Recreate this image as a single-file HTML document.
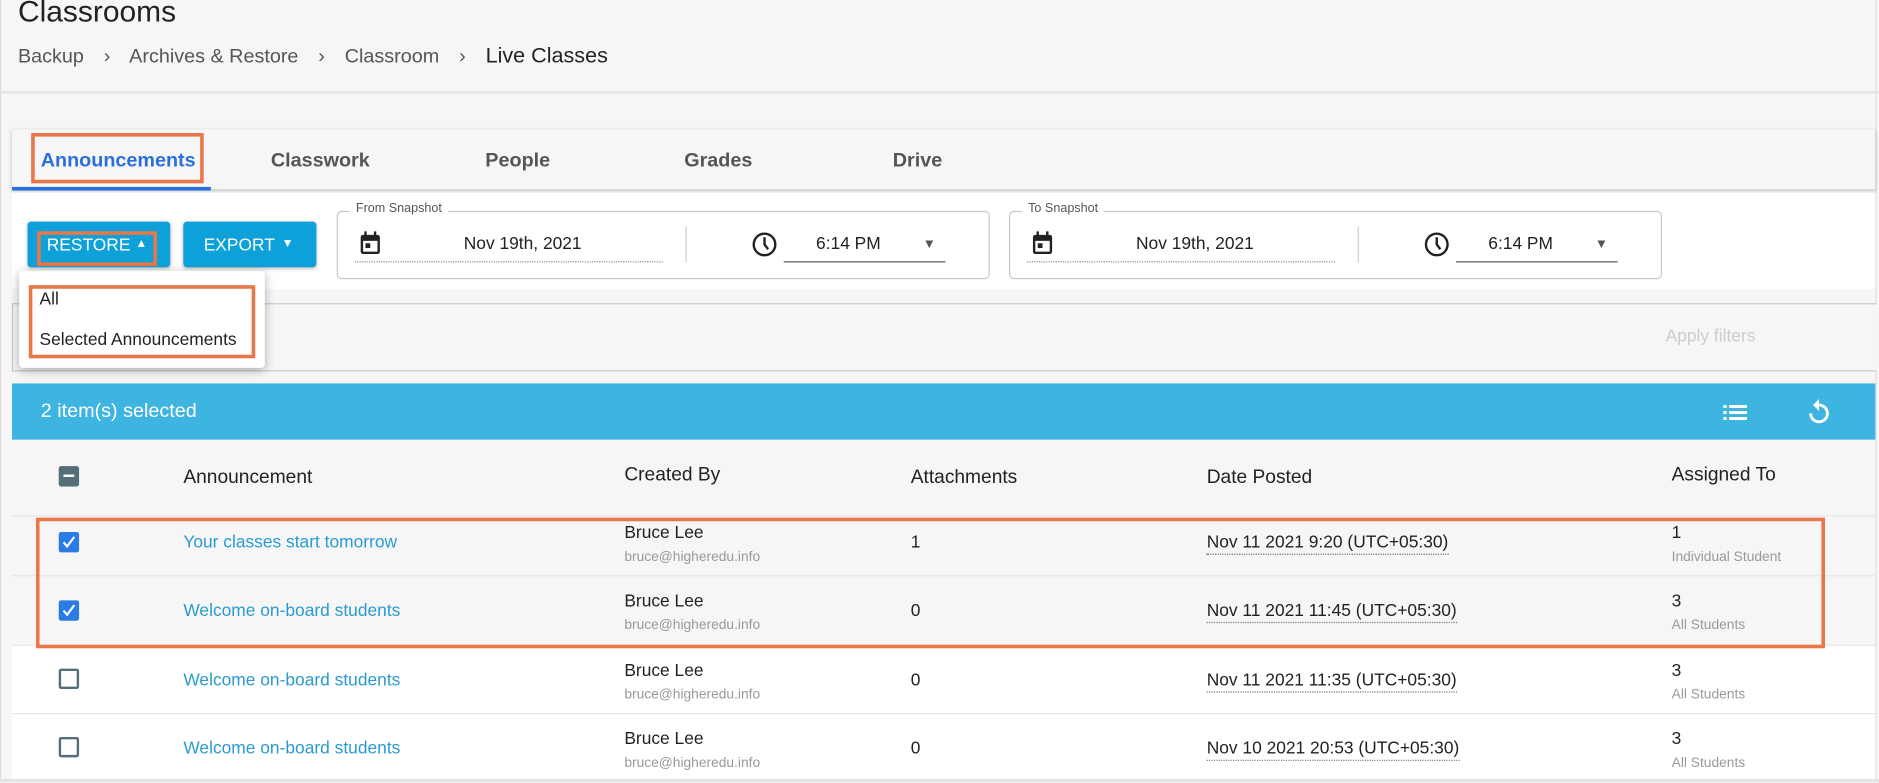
<!DOCTYPE html>
<html><head><meta charset="utf-8"><style>
html,body{margin:0;padding:0;width:1879px;height:782px;overflow:hidden;background:#fff;font-family:"Liberation Sans",sans-serif;}
#w{position:absolute;left:0;top:0;width:1568px;height:653px;transform:scale(1.1983);transform-origin:0 0;background:#f6f6f6;}
.a{position:absolute;white-space:nowrap;}
.ob{position:absolute;border:3px solid #e8774a;box-sizing:border-box;}
.tab{position:absolute;top:125px;font-size:16.5px;font-weight:bold;color:#555;}
.btn{position:absolute;top:185px;height:38px;background:#0ea1d9;border-radius:3px;box-shadow:0 1px 3px rgba(0,0,0,.3);color:#fff;font-size:14.5px;}
.fs{position:absolute;top:176px;height:55px;border:1px solid #c8c8c8;border-radius:4px;background:#fff;}
.lg{position:absolute;top:-9px;left:10px;background:#fff;padding:0 5px;font-size:10.5px;color:#555;}
.hd{position:absolute;top:390px;font-size:16px;color:#222;}
.row{position:absolute;left:10px;width:1555px;height:57px;border-top:1px solid #e6e6e6;}
.lnk{position:absolute;left:143px;font-size:14.5px;color:#2a9bd0;}
.nm{position:absolute;left:511px;font-size:14.5px;color:#222;}
.em{position:absolute;left:511px;font-size:11.5px;color:#999;}
.at{position:absolute;left:750px;font-size:14.5px;color:#222;}
.dt{position:absolute;left:997px;font-size:14.5px;color:#222;border-bottom:1px dotted #777;line-height:18px;}
.n{position:absolute;left:1385px;font-size:14.5px;color:#222;}
.sub{position:absolute;left:1385px;font-size:11.5px;color:#999;}
.cb{position:absolute;left:39px;width:17px;height:17px;box-sizing:border-box;border-radius:2px;}
</style></head><body><div id="w">
<div class="a" style="left:15px;top:-4px;font-size:25px;color:#222;">Classrooms</div>
<div class="a" style="left:15px;top:36px;font-size:16.5px;color:#555;">Backup <span style="margin:0 12px">›</span> Archives &amp; Restore <span style="margin:0 12px">›</span> Classroom <span style="margin:0 12px;">›</span> <span style="color:#222;font-size:18px">Live Classes</span></div>
<div style="position:absolute;left:0;top:76px;width:1568px;height:2px;background:#e4e4e4"></div>
<div style="position:absolute;left:0;top:0;width:1px;height:653px;background:#ddd"></div>
<div style="position:absolute;left:1565px;top:0;width:1px;height:653px;background:#ddd"></div>
<!-- tabs -->
<div style="position:absolute;left:10px;top:108px;width:1555px;height:50px;background:#f6f6f6;box-shadow:0 1px 3px rgba(0,0,0,.25)"></div>
<div class="tab" style="left:34px;color:#2a6fdb">Announcements</div>
<div style="position:absolute;left:10px;top:156px;width:166px;height:3px;background:#2a6fdb"></div>
<div class="ob" style="left:26px;top:111px;width:144px;height:42px"></div>
<div class="tab" style="left:226px">Classwork</div>
<div class="tab" style="left:405px">People</div>
<div class="tab" style="left:571px">Grades</div>
<div class="tab" style="left:745px">Drive</div>
<!-- toolbar -->
<div style="position:absolute;left:10px;top:161px;width:1555px;height:80px;background:#fff"></div>
<div class="btn" style="left:23px;width:119px"><span class="a" style="left:16px;top:12px">RESTORE</span><span class="a" style="left:90px;top:13px;font-size:10px">▲</span></div>
<div class="ob" style="left:31px;top:193px;width:100px;height:29px"></div>
<div class="btn" style="left:153px;width:111px"><span class="a" style="left:17px;top:12px">EXPORT</span><span class="a" style="left:82px;top:13px;font-size:10px">▼</span></div>
<div class="fs" style="left:281px;width:543px"><div class="lg">From Snapshot</div>
<svg class="a" style="left:18px;top:16px" width="18" height="20" viewBox="0 0 18 20"><rect x="1" y="3" width="16" height="16" rx="2" fill="#222"/><rect x="3" y="8" width="12" height="9" fill="#fff"/><rect x="4" y="0" width="2" height="5" fill="#222"/><rect x="12" y="0" width="2" height="5" fill="#222"/><rect x="5" y="10" width="4" height="4" fill="#222"/></svg>
<div class="a" style="left:105px;top:19px;font-size:14.5px;color:#222">Nov 19th, 2021</div>
<div style="position:absolute;left:14px;top:41px;width:257px;border-top:1px dotted #888"></div>
<div style="position:absolute;left:290px;top:12px;width:1px;height:30px;background:#ccc"></div>
<svg class="a" style="left:345px;top:16px" width="22" height="22" viewBox="0 0 22 22"><circle cx="11" cy="11" r="9" fill="none" stroke="#222" stroke-width="2"/><path d="M11 5v6l3 4" fill="none" stroke="#222" stroke-width="2"/></svg>
<div class="a" style="left:399px;top:19px;font-size:14.5px;color:#222">6:14 PM</div>
<div class="a" style="left:488px;top:21px;font-size:11px;color:#555">▼</div>
<div style="position:absolute;left:372px;top:41px;width:135px;height:1px;background:#555"></div>
</div>
<div class="fs" style="left:842px;width:543px"><div class="lg">To Snapshot</div>
<svg class="a" style="left:18px;top:16px" width="18" height="20" viewBox="0 0 18 20"><rect x="1" y="3" width="16" height="16" rx="2" fill="#222"/><rect x="3" y="8" width="12" height="9" fill="#fff"/><rect x="4" y="0" width="2" height="5" fill="#222"/><rect x="12" y="0" width="2" height="5" fill="#222"/><rect x="5" y="10" width="4" height="4" fill="#222"/></svg>
<div class="a" style="left:105px;top:19px;font-size:14.5px;color:#222">Nov 19th, 2021</div>
<div style="position:absolute;left:14px;top:41px;width:257px;border-top:1px dotted #888"></div>
<div style="position:absolute;left:290px;top:12px;width:1px;height:30px;background:#ccc"></div>
<svg class="a" style="left:345px;top:16px" width="22" height="22" viewBox="0 0 22 22"><circle cx="11" cy="11" r="9" fill="none" stroke="#222" stroke-width="2"/><path d="M11 5v6l3 4" fill="none" stroke="#222" stroke-width="2"/></svg>
<div class="a" style="left:399px;top:19px;font-size:14.5px;color:#222">6:14 PM</div>
<div class="a" style="left:488px;top:21px;font-size:11px;color:#555">▼</div>
<div style="position:absolute;left:372px;top:41px;width:135px;height:1px;background:#555"></div>
</div>
<!-- filter panel -->
<div style="position:absolute;left:10px;top:253px;width:1555px;height:55px;border-top:1px solid #c8c8c8;border-bottom:1px solid #c8c8c8;border-left:1px solid #c8c8c8;background:#f6f6f6"></div>
<div class="a" style="left:1390px;top:273px;font-size:14.5px;color:#ccc">Apply filters</div>
<!-- dropdown -->
<div style="position:absolute;left:16px;top:226px;width:205px;height:81px;background:#fff;border-radius:3px;box-shadow:0 2px 8px rgba(0,0,0,.3)"></div>
<div class="a" style="left:33px;top:242px;font-size:14.5px;color:#222">All</div>
<div class="a" style="left:33px;top:276px;font-size:14.5px;color:#222">Selected Announcements</div>
<div class="ob" style="left:24px;top:238px;width:189px;height:61px"></div>
<!-- blue bar -->
<div style="position:absolute;left:10px;top:320px;width:1555px;height:47px;background:#3db5e0"></div>
<div class="a" style="left:34px;top:334px;font-size:16.5px;color:#fff">2 item(s) selected</div>
<svg class="a" style="left:1438px;top:336px" width="20" height="16" viewBox="0 0 20 16"><g fill="#fff"><rect x="0" y="2" width="3" height="2.5"/><rect x="5" y="2" width="15" height="2.5"/><rect x="0" y="7" width="3" height="2.5"/><rect x="5" y="7" width="15" height="2.5"/><rect x="0" y="12" width="3" height="2.5"/><rect x="5" y="12" width="15" height="2.5"/></g></svg>
<svg class="a" style="left:1508px;top:332px" width="20" height="24" viewBox="0 0 20 24"><path d="M10 6a7 7 0 1 1-7 7" fill="none" stroke="#fff" stroke-width="2.4"/><path d="M10 1v10l-5-5z" fill="#fff"/></svg>
<!-- header -->
<div style="position:absolute;left:10px;top:367px;width:1555px;height:63px;background:#f6f6f6"></div>
<div class="cb" style="left:49px;top:389px;background:#546e7a"><div style="position:absolute;left:4px;top:7px;width:9px;height:2px;background:#fff"></div></div>
<div class="hd" style="left:153px">Announcement</div>
<div class="hd" style="left:521px;top:388px">Created By</div>
<div class="hd" style="left:760px">Attachments</div>
<div class="hd" style="left:1007px">Date Posted</div>
<div class="hd" style="left:1395px;top:388px">Assigned To</div>
<!-- rows -->
<div class="row" style="top:430px;background:#f6f6f6;height:50px">
<div class="cb" style="top:13px;background:#2a7be4"><svg width="17" height="17" viewBox="0 0 17 17"><path d="M4 8.5l3 3.5 6-8" fill="none" stroke="#fff" stroke-width="1.8"/></svg></div>
<div class="lnk" style="top:14px">Your classes start tomorrow</div>
<div class="nm" style="top:6px">Bruce Lee</div><div class="em" style="top:28px">bruce@higheredu.info</div>
<div class="at" style="top:14px">1</div>
<div class="dt" style="top:13px">Nov 11 2021 9:20 (UTC+05:30)</div>
<div class="n" style="top:6px">1</div><div class="sub" style="top:28px">Individual Student</div>
</div>
<div class="row" style="top:480px;background:#f6f6f6;height:58px">
<div class="cb" style="top:20px;background:#2a7be4"><svg width="17" height="17" viewBox="0 0 17 17"><path d="M4 8.5l3 3.5 6-8" fill="none" stroke="#fff" stroke-width="1.8"/></svg></div>
<div class="lnk" style="top:21px">Welcome on-board students</div>
<div class="nm" style="top:13px">Bruce Lee</div><div class="em" style="top:35px">bruce@higheredu.info</div>
<div class="at" style="top:21px">0</div>
<div class="dt" style="top:20px">Nov 11 2021 11:45 (UTC+05:30)</div>
<div class="n" style="top:13px">3</div><div class="sub" style="top:35px">All Students</div>
</div>
<div class="row" style="top:538px;background:#fff">
<div class="cb" style="top:19px;border:2px solid #546e7a;background:#fff"></div>
<div class="lnk" style="top:21px">Welcome on-board students</div>
<div class="nm" style="top:13px">Bruce Lee</div><div class="em" style="top:35px">bruce@higheredu.info</div>
<div class="at" style="top:21px">0</div>
<div class="dt" style="top:20px">Nov 11 2021 11:35 (UTC+05:30)</div>
<div class="n" style="top:13px">3</div><div class="sub" style="top:35px">All Students</div>
</div>
<div class="row" style="top:595px;background:#fff">
<div class="cb" style="top:19px;border:2px solid #546e7a;background:#fff"></div>
<div class="lnk" style="top:21px">Welcome on-board students</div>
<div class="nm" style="top:13px">Bruce Lee</div><div class="em" style="top:35px">bruce@higheredu.info</div>
<div class="at" style="top:21px">0</div>
<div class="dt" style="top:20px">Nov 10 2021 20:53 (UTC+05:30)</div>
<div class="n" style="top:13px">3</div><div class="sub" style="top:35px">All Students</div>
</div>
<div class="ob" style="left:30px;top:432px;width:1493px;height:109px"></div>
<div style="position:absolute;left:0;top:650px;width:1568px;height:3px;background:#e4e4e4"></div>
</div></body></html>
